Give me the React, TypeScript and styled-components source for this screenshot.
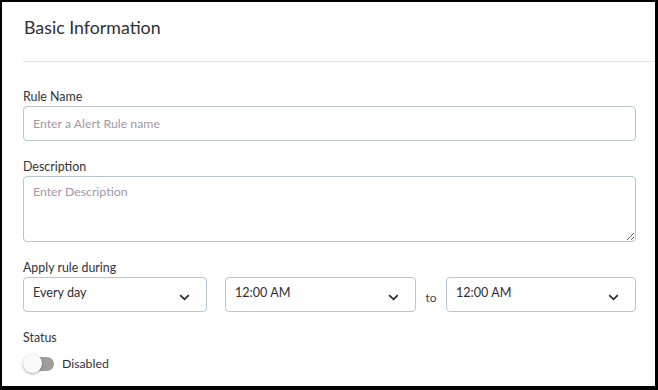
import styled, { createGlobalStyle } from "styled-components";

const GlobalStyle = createGlobalStyle`
  html, body {
    margin: 0;
    padding: 0;
    background: #fff;
  }
  body {
    font-family: Lato, "Noto Sans", sans-serif;
    color: #333;
  }
`

const Frame = styled.div`
  width: 658px;
  height: 390px;
  box-sizing: border-box;
  border-style: solid;
  border-color: #000;
  border-width: 2px 3px 4px 2px;
  overflow: hidden;
  background: #fff;
`
const Header = styled.div`
  margin-left: 21px;
  height: 60px;
  box-sizing: border-box;
  padding: 14px 0 0 1px;
  border-bottom: 1px solid #e2e2e2;
`
const Title = styled.h2`
  margin: 0;
  font-size: 17.8px;
  line-height: 22px;
  font-weight: 400;
  color: #2f2f33;
`
const Body = styled.div`
  padding: 27px 19px 0 21px;
`
const Field = styled.div`
  margin-bottom: 18px;
`
const Label = styled.label`
  display: block;
  font-size: 12.4px;
  line-height: 16px;
  color: #333;
  margin-bottom: 1px;
`
const boxBorder = `
  border: 1px solid #b8c5cf;
  border-radius: 4px;
  box-sizing: border-box;
`
const TextInput = styled.input`
  ${boxBorder}
  display: block;
  width: 100%;
  height: 35px;
  padding: 0 9px;
  font-family: inherit;
  font-size: 12.3px;
  color: #333;
  outline: none;
  &::placeholder {
    color: #9f98a6;
  }
`
const TextArea = styled.textarea`
  ${boxBorder}
  display: block;
  width: 100%;
  height: 66px;
  padding: 7px 9px;
  font-family: inherit;
  font-size: 12.3px;
  line-height: 16px;
  color: #333;
  outline: none;
  resize: vertical;
  &::placeholder {
    color: #9f98a6;
  }
`
const SelectRow = styled.div`
  display: flex;
  align-items: flex-start;
`
const Select = styled.div<{ $width: number }>`
  ${boxBorder}
  width: ${(p) => p.$width}px;
  height: 35px;
  display: flex;
  justify-content: space-between;
  padding: 7px 16px 0 9px;
  font-size: 12.6px;
  line-height: 16px;
  color: #2f2f33;
  cursor: pointer;
  svg {
    margin-top: 9px;
  }
`
const Gap = styled.div`
  width: 18px;
`
const To = styled.span`
  width: 30px;
  text-align: center;
  padding-top: 13px;
  font-size: 12px;
  line-height: 16px;
  color: #444;
`
const ToggleRow = styled.div`
  display: flex;
  align-items: center;
  margin-top: 8px;
  gap: 8px;
`
const Track = styled.div`
  position: relative;
  width: 31px;
  height: 19px;
  display: flex;
  align-items: center;
  &::before {
    content: "";
    display: block;
    margin-left: 3px;
    width: 29px;
    height: 14px;
    border-radius: 7px;
    background: #9e9e9e;
  }
`
const Thumb = styled.span`
  position: absolute;
  left: 0;
  top: 0;
  width: 19px;
  height: 19px;
  border-radius: 50%;
  background: #fafafa;
  box-shadow: 0 1px 3px rgba(0, 0, 0, 0.35);
`
const ToggleText = styled.span`
  font-size: 12.3px;
  color: #333;
`

function Chevron() {
  return (
    <svg width="11" height="7" viewBox="0 0 11 7" role="presentation">
      <polyline points="1.2,1.2 5.5,5.3 9.8,1.2" fill="none" stroke="#2a2a33" strokeWidth="1.8" />
    </svg>
  )
}

function Dropdown({ value, width }: { value: string; width: number }) {
  return (
    <Select $width={width}>
      <span>{value}</span>
      <Chevron />
    </Select>
  )
}

export default function App() {
  return (
    <>
      <GlobalStyle />
      <Frame>
        <Header>
          <Title>Basic Information</Title>
        </Header>
        <Body>
          <Field>
            <Label>Rule Name</Label>
            <TextInput placeholder="Enter a Alert Rule name" />
          </Field>
          <Field>
            <Label>Description</Label>
            <TextArea placeholder="Enter Description" />
          </Field>
          <Field>
            <Label>Apply rule during</Label>
            <SelectRow>
              <Dropdown value="Every day" width={184} />
              <Gap />
              <Dropdown value="12:00 AM" width={191} />
              <To>to</To>
              <Dropdown value="12:00 AM" width={190} />
            </SelectRow>
          </Field>
          <Field>
            <Label>Status</Label>
            <ToggleRow>
              <Track>
                <Thumb />
              </Track>
              <ToggleText>Disabled</ToggleText>
            </ToggleRow>
          </Field>
        </Body>
      </Frame>
    </>
  )
}
